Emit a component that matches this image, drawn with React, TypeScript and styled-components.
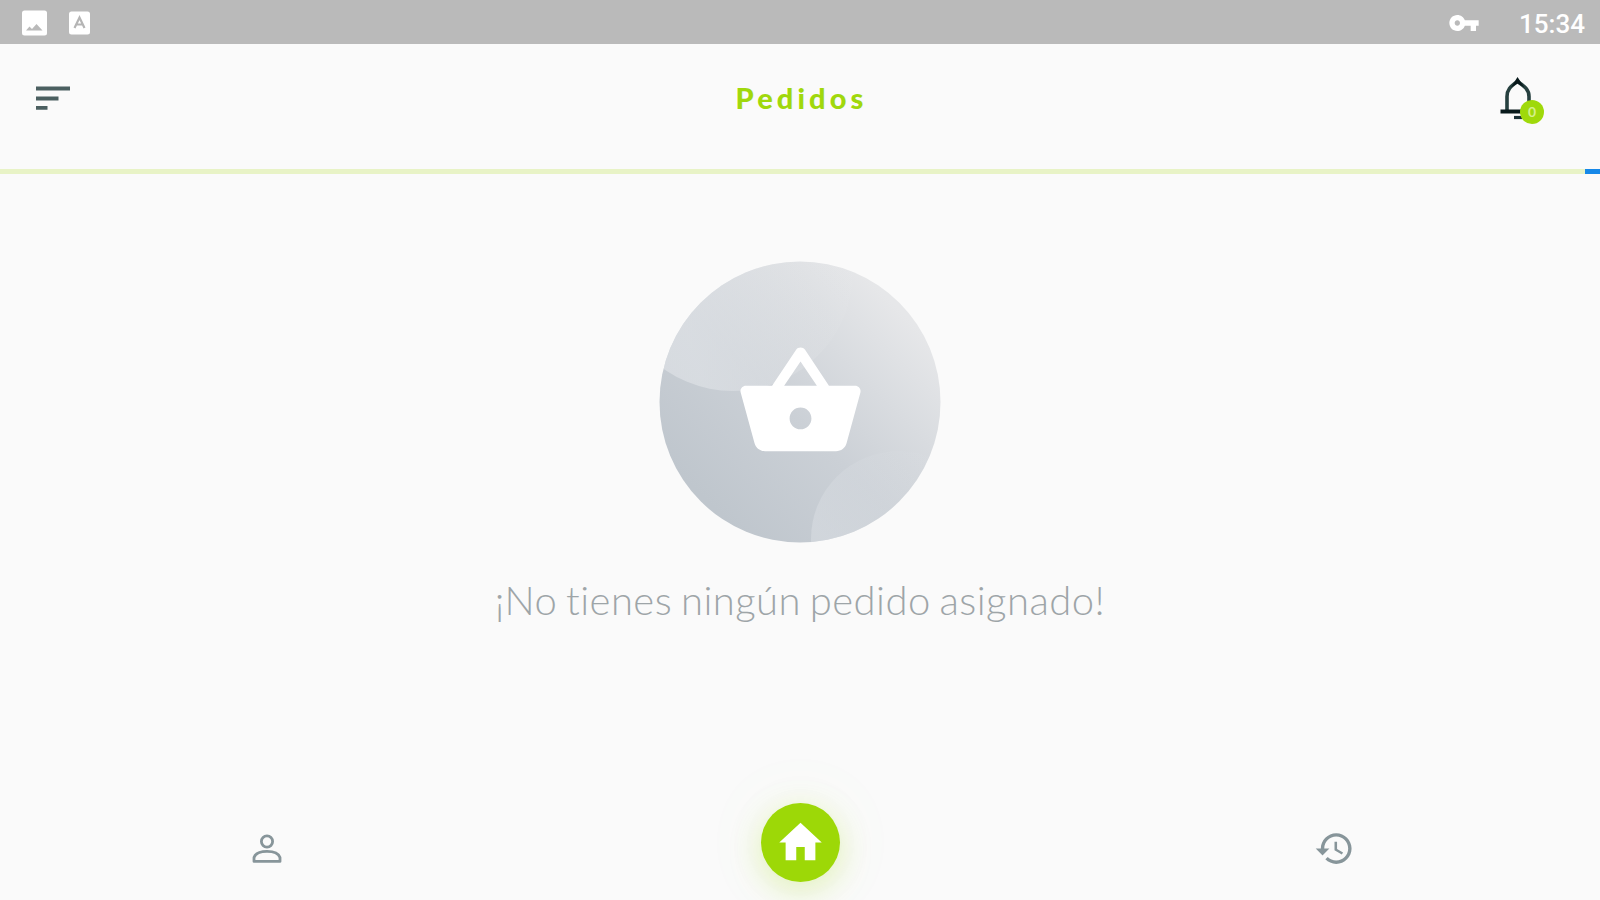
import React from "react";
import styled, { createGlobalStyle } from "styled-components";

const GlobalStyle = createGlobalStyle`
  * { box-sizing: border-box; }
  body { margin: 0; background: #fafafa; overflow: hidden; }
`;

const Screen = styled.div`
  width: 1600px;
  height: 900px;
  display: flex;
  flex-direction: column;
  overflow: hidden;
  background: #fafafa;
  font-family: Lato, "Liberation Sans", sans-serif;
`;

const StatusBar = styled.header`
  height: 44px;
  flex: none;
  display: flex;
  align-items: center;
  justify-content: space-between;
  padding: 2px 15px 0 22px;
  background: #bababa;
  color: #fff;
`;

const StatusGroup = styled.div<{ $gap: number }>`
  display: flex;
  align-items: center;
  gap: ${(p) => p.$gap}px;
`;

const Clock = styled.span`
  padding-top: 2px;
  font: 500 26px/32px Roboto, sans-serif;
  letter-spacing: 0;
`;

const AppBar = styled.div`
  height: 125px;
  flex: none;
  display: grid;
  grid-template-columns: 1fr auto 1fr;
  align-items: start;
  padding: 31px 54px 0 36px;
`;

const Title = styled.h1`
  margin: 3px 0 0 21px;
  font: 900 29px/40px Lato, sans-serif;
  letter-spacing: 4.1px;
  color: #a0d80c;
`;

const IconButton = styled.button<{ $end?: boolean }>`
  display: flex;
  padding: 0;
  border: 0;
  background: none;
  position: relative;
  justify-self: ${(p) => (p.$end ? "end" : "start")};
`;

const MenuButton = styled(IconButton)`
  margin-top: 11px;
`;

const Badge = styled.span`
  position: absolute;
  left: 20px;
  top: 25px;
  width: 24px;
  height: 24px;
  border-radius: 50%;
  background: #9fd90a;
  color: #d5f08c;
  font: 700 14px/23px Lato, sans-serif;
  text-align: center;
`;

const Progress = styled.div`
  height: 5px;
  flex: none;
  display: flex;
  justify-content: flex-end;
  background: #e8f3c6;
`;

const ProgressValue = styled.div`
  width: 15px;
  background: #1688e8;
`;

const Content = styled.main`
  flex: 1;
  display: flex;
  flex-direction: column;
  align-items: center;
  padding-top: 87px;
`;

const Message = styled.p`
  margin: 32px 0 0;
  font: 300 40px/50px Lato, sans-serif;
  font-variant-ligatures: none;
  letter-spacing: 0.45px;
  word-spacing: -2.5px;
  white-space: nowrap;
  color: #9ea5a8;
`;

const NavBar = styled.nav`
  height: 104px;
  flex: none;
  display: grid;
  grid-template-columns: repeat(3, 1fr);
  justify-items: center;
  align-items: start;
  color: #87959a;
`;

const NavItem = styled.button<{ $top: number; $shift?: number }>`
  display: flex;
  margin: ${(p) => p.$top}px 0 0 ${(p) => p.$shift ?? 0}px;
  padding: 0;
  border: 0;
  background: none;
  color: inherit;
`;

const HomeButton = styled(NavItem)`
  width: 79px;
  height: 79px;
  align-items: center;
  justify-content: center;
  border-radius: 50%;
  background: #9dd807;
  color: #fff;
  box-shadow: 0 8px 32px rgba(157, 216, 7, 0.26), 0 0 80px rgba(157, 216, 7, 0.06);
`;

const PictureIcon = () => (
  <svg width="26" height="26" viewBox="0 0 26 26">
    <rect x="0" y="0.5" width="25" height="25" rx="2.5" fill="#fff" />
    <path d="M4 20.500 7.500 16.500l2.500 2.500 4.500-5 6 6.500z" fill="#bababa" />
  </svg>
);

const LetterIcon = () => (
  <svg width="21" height="24" viewBox="0 0 21 24">
    <rect x="0" y="0.5" width="21" height="23" rx="2.5" fill="#fff" />
    <path d="M5.5 17 10.5 6.5 15.5 17M7.7 13.5h5.6" fill="none" stroke="#b5b5b5" strokeWidth="2.2" />
  </svg>
);

const KeyIcon = () => (
  <svg width="32" height="32" viewBox="0 0 24 24" fill="currentColor">
    <path d="M12.65 10C11.83 7.67 9.61 6 7 6c-3.31 0-6 2.69-6 6s2.69 6 6 6c2.61 0 4.83-1.67 5.65-4H17v4h4v-4h2v-4H12.65zM7 14c-1.1 0-2-.9-2-2s.9-2 2-2 2 .9 2 2-.9 2-2 2z" />
  </svg>
);

const MenuIcon = () => (
  <svg width="35" height="25" viewBox="0 0 35 25" stroke="#4b5f60" strokeWidth="3.8">
    <path d="M0 2.5h34M0 12.5h22.5M0 21.8h11.5" />
  </svg>
);

const BellIcon = () => (
  <svg width="46" height="50" viewBox="0 0 46 50" fill="none">
    <path d="M7 36V21.500C7 15 10 11.500 17.500 6.500C25 11.500 29 15 29 21.500V36" stroke="#26403f" strokeWidth="3.600" />
    <path d="M11 12.500 17.500 2 24.500 12.500 17.500 8.500Z" fill="#08191b" />
    <path d="M0.500 36.500H34" stroke="#08191b" strokeWidth="3.800" />
    <path d="M14 42.500H22" stroke="#1a2f35" strokeWidth="3.200" />
  </svg>
);

const EmptyIllustration = () => (
  <svg width="282" height="282" viewBox="0 0 282 282">
    <defs>
      <linearGradient id="disc" x1="0.16" y1="0.84" x2="0.84" y2="0.16">
        <stop offset="0" stopColor="#bfc6cd" />
        <stop offset="0.45" stopColor="#cbd0d6" />
        <stop offset="1" stopColor="#e6e7e9" />
      </linearGradient>
      <linearGradient id="sheen" gradientUnits="userSpaceOnUse" x1="40" y1="110" x2="170" y2="70">
        <stop offset="0" stopColor="#e2e5e9" stopOpacity="0.6" />
        <stop offset="1" stopColor="#e7e9eb" stopOpacity="0.12" />
      </linearGradient>
      <linearGradient id="lobe" gradientUnits="userSpaceOnUse" x1="155" y1="260" x2="240" y2="190">
        <stop offset="0" stopColor="#dce0e5" stopOpacity="0.5" />
        <stop offset="1" stopColor="#dce0e5" stopOpacity="0.1" />
      </linearGradient>
      <clipPath id="round">
        <circle cx="141" cy="141" r="140.500" />
      </clipPath>
    </defs>
    <g clipPath="url(#round)">
      <rect width="282" height="282" fill="url(#disc)" />
      <circle cx="74" cy="10" r="120" fill="url(#sheen)" />
      <circle cx="240" cy="278" r="88" fill="url(#lobe)" />
    </g>
    <path
      transform="translate(76 75.500) scale(5.460)"
      fill="#fff"
      d="M17.210 9l-4.380-6.560c-.19-.28-.51-.42-.83-.42-.32 0-.64.14-.83.43L6.790 9H2c-.55 0-1 .45-1 1 0 .09.01.18.04.27l2.540 9.270c.23.84 1 1.460 1.920 1.460h13c.92 0 1.690-.62 1.930-1.460l2.540-9.270L23 10c0-.55-.45-1-1-1h-4.790zM9 9l3-4.400L15 9H9zm3 8c-1.100 0-2-.9-2-2s.9-2 2-2 2 .9 2 2-.9 2-2 2z"
    />
  </svg>
);

const PersonIcon = () => (
  <svg width="30" height="30" viewBox="0 0 30 30" fill="none" stroke="currentColor" strokeWidth="2.800">
    <circle cx="15" cy="7.500" r="5.600" />
    <path d="M2 27.400V23.500C3.500 19 9 17.400 15 17.400S26.500 19 28 23.500V27.400Z" strokeLinejoin="round" />
  </svg>
);

const HomeIcon = () => (
  <svg width="51" height="53" viewBox="0 0 24 24" preserveAspectRatio="none" fill="currentColor">
    <path d="M10 20v-6h4v6h5v-8h3L12 3 2 12h3v8z" />
  </svg>
);

const HistoryIcon = () => (
  <svg width="41" height="41" viewBox="0 0 24 24" fill="currentColor">
    <path d="M13 3c-4.970 0-9 4.030-9 9H1l3.890 3.890.07.14L9 12H6c0-3.870 3.130-7 7-7s7 3.130 7 7-3.130 7-7 7c-1.930 0-3.680-.79-4.940-2.060l-1.420 1.420C8.270 19.990 10.510 21 13 21c4.970 0 9-4.030 9-9s-4.030-9-9-9zm-1 5v5l4.280 2.540.72-1.210-3.500-2.080V8H12z" />
  </svg>
);

export default function App() {
  return (
    <>
      <GlobalStyle />
      <Screen>
        <StatusBar>
          <StatusGroup $gap={21}>
            <PictureIcon />
            <LetterIcon />
          </StatusGroup>
          <StatusGroup $gap={39}>
            <KeyIcon />
            <Clock>15:34</Clock>
          </StatusGroup>
        </StatusBar>
        <AppBar>
          <MenuButton aria-label="Menú">
            <MenuIcon />
          </MenuButton>
          <Title>Pedidos</Title>
          <IconButton $end aria-label="Notificaciones">
            <BellIcon />
            <Badge>0</Badge>
          </IconButton>
        </AppBar>
        <Progress>
          <ProgressValue />
        </Progress>
        <Content>
          <EmptyIllustration />
          <Message>¡No tienes ningún pedido asignado!</Message>
        </Content>
        <NavBar>
          <NavItem $top={38} aria-label="Perfil">
            <PersonIcon />
          </NavItem>
          <HomeButton $top={7} $shift={1} aria-label="Inicio">
            <HomeIcon />
          </HomeButton>
          <NavItem $top={32} $shift={3} aria-label="Historial">
            <HistoryIcon />
          </NavItem>
        </NavBar>
      </Screen>
    </>
  );
}
